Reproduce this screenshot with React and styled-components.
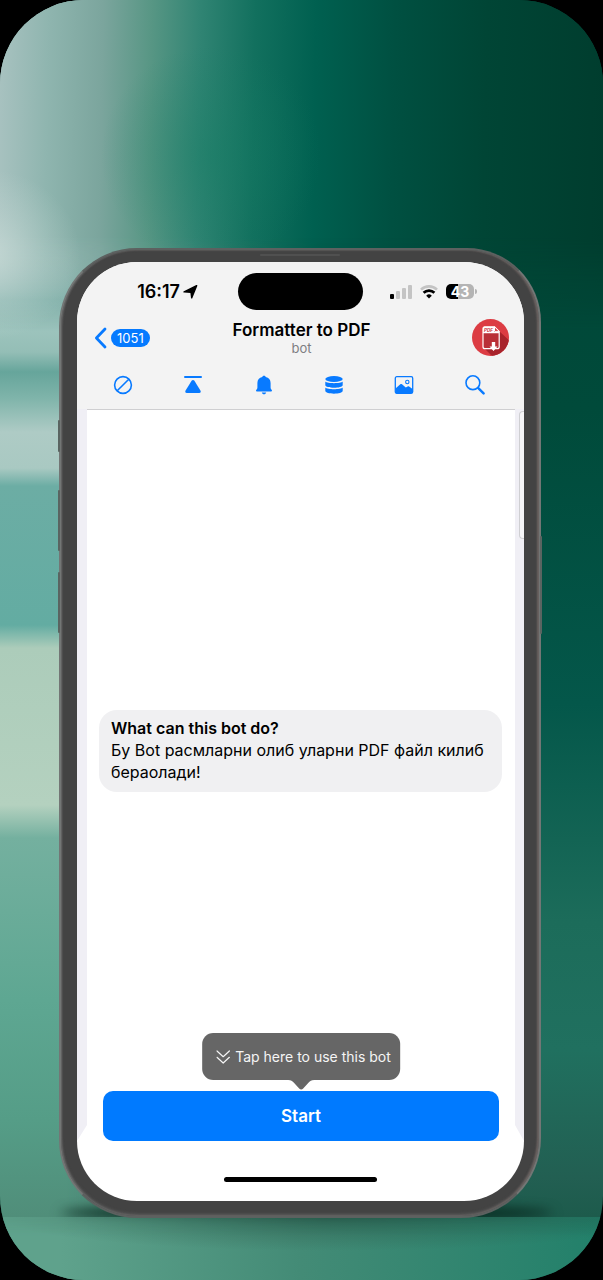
import React from "react";
import styled, { createGlobalStyle } from "styled-components";

const GlobalStyle = createGlobalStyle`
  * { box-sizing: border-box; }
  body {
    margin: 0;
    background: #000;
    font-family: Inter, "Liberation Sans", sans-serif;
    color: #000;
  }
  button { font: inherit; border: 0; padding: 0; margin: 0; background: none; cursor: pointer; }
  svg { display: block; }
`;

const Scene = styled.main`
  position: relative;
  isolation: isolate;
  display: flex;
  flex-direction: column;
  min-height: 100vh;
  padding: 248px 62px 62px 59px;
  border-radius: 84px;
  overflow: hidden;
  background: linear-gradient(#004435 0, #004a3a 32%, #04574a 55%, #1c6c5a 72%, #20705f 82%, #225f52 92%, #1d5b4c 95%);
`;

const Light = styled.div`
  position: absolute;
  z-index: -3;
`;

const LeftLight = styled(Light)`
  inset: 0;
  background: linear-gradient(
    #a6bcba 0, #9fbebb 200px, #b8cecc 222px, #b0cac7 245px, #84b4ad 300px,
    #9cc3bc 332px, #94beb6 352px, #66a59b 372px, #7fb4aa 398px, #aecbc5 432px,
    #a9c9c2 468px, #6cada4 486px, #63aca2 625px, #acccba 648px, #b4d1bf 805px,
    #74b09f 838px, #5ea792 1000px, #559d87 1120px, #4d8471 100%
  );
  mask-image: linear-gradient(90deg, #000 11%, transparent 54%);
`;

const TopLight = styled(Light)`
  inset: 0 0 auto;
  height: 330px;
  background:
    radial-gradient(ellipse 110px 110px at 35% 155px, rgba(20, 126, 100, 0.4), transparent),
    linear-gradient(
      91deg, #a8c2c0 0, #8fb5af 8%, #7ba59d 17%, #579684 25%, #308473 33%,
      #12705e 42%, #006050 52%, #005041 65%, #004535 80%, #003d2e 100%
    );
  mask-image: linear-gradient(#000 72%, transparent);
`;

const Glow = styled(Light)`
  top: 170px;
  left: -100px;
  width: 180px;
  height: 170px;
  background: radial-gradient(closest-side, rgba(208, 224, 220, 0.65), rgba(208, 224, 220, 0.3) 50%, transparent);
`;

const Floor = styled.div`
  position: absolute;
  inset: auto 0 0;
  z-index: -1;
  height: 63px;
  background:
    radial-gradient(ellipse 55% 34px at 55% 0, rgba(40, 78, 64, 0.5), transparent),
    linear-gradient(90deg, #5fa28c 10%, #438b76 50%, #22806a);
  mask-image: linear-gradient(rgba(0, 0, 0, 0.7), #000 30%);
`;

const Shadow = styled.div`
  position: absolute;
  inset: auto 50px 60px 60px;
  z-index: -2;
  height: 14px;
  border-radius: 50%;
  background: #06231a;
  filter: blur(6px);
`;

const Phone = styled.div`
  position: relative;
  flex: 1;
  display: flex;
  flex-direction: column;
  padding: 12px 15px 15px 16px;
  border: 2px solid #737675;
  border-top-color: #5d6160;
  border-bottom-color: #5d6160;
  border-radius: 78px 74px 80px 78px;
  background: #434343;
  box-shadow: inset 1px 0 2px #6b6b6b, inset -2px 0 2px #6b6260, inset 0 -2px 3px #5c5c5c;
`;

const SideKey = styled.span`
  position: absolute;
  ${(p) => p.$side}: -3px;
  top: ${(p) => p.$top}px;
  width: 2px;
  height: ${(p) => p.$size}px;
  border-radius: 1px;
  background: #5a6461;
`;

const Speaker = styled.span`
  position: absolute;
  top: 4px;
  left: 50%;
  width: 80px;
  height: 2px;
  margin-left: -40px;
  border-radius: 1px;
  background: #505050;
`;

const Screen = styled.div`
  flex: 1;
  display: flex;
  flex-direction: column;
  overflow: hidden;
  border-radius: 60px;
  background: #fff;
`;

const Header = styled.header`
  display: flex;
  flex-direction: column;
  background: #f3f3f3;
`;

const StatusBar = styled.div`
  display: grid;
  grid-template-columns: 1fr 125px 1fr;
  align-items: center;
  padding-top: 11px;
`;

const Clock = styled.div`
  display: flex;
  justify-content: flex-end;
  align-items: center;
  gap: 3px;
  padding-right: 40px;
  font-size: 18px;
  line-height: 22px;
  font-weight: 600;
`;

const Island = styled.div`
  height: 37px;
  border-radius: 19px;
  background: #000;
`;

const Indicators = styled.div`
  display: flex;
  align-items: center;
  gap: 8px;
  padding-left: 27px;
`;

const Battery = styled.div`
  display: flex;
  align-items: center;
  gap: 1px;
`;

const BatteryLevel = styled.span`
  width: 28px;
  height: 15px;
  border-radius: 5px;
  background: linear-gradient(90deg, #000 43%, #b4b4b4 43%);
  color: #fff;
  font-size: 14px;
  line-height: 15px;
  font-weight: 700;
  text-align: center;
`;

const BatteryTip = styled.span`
  width: 2px;
  height: 5px;
  border-radius: 0 2px 2px 0;
  background: #b4b4b4;
`;

const NavBar = styled.nav`
  display: grid;
  grid-template-columns: 1fr auto 1fr;
  align-items: center;
  height: 51px;
  padding: 4px 15px 0 17px;
`;

const BackButton = styled.button`
  display: flex;
  align-items: center;
  gap: 4px;
  justify-self: start;
`;

const Unread = styled.span`
  padding: 0 6px;
  border-radius: 9px;
  background: #057aff;
  color: #fff;
  font-size: 13px;
  line-height: 18px;
`;

const Titles = styled.div`
  display: flex;
  flex-direction: column;
  text-align: center;
`;

const Title = styled.h1`
  margin: 0;
  font-size: 17px;
  line-height: 20px;
  font-weight: 600;
`;

const Subtitle = styled.span`
  color: #7e7e82;
  font-size: 13px;
  line-height: 16px;
`;

const AvatarButton = styled.button`
  justify-self: end;
`;

const Toolbar = styled.div`
  display: flex;
  height: 48px;
  padding: 0 14px 0 11px;
`;

const ToolButton = styled.button`
  flex: 1;
  display: flex;
  align-items: center;
  justify-content: center;
  color: #087aff;
`;

const Body = styled.div`
  flex: 1;
  display: grid;
  grid-template-columns: 10px 1fr 9px;
`;

const Edge = styled.div`
  display: flex;
  justify-content: flex-end;
  background: #f0eff5;
  clip-path: ${(p) =>
    p.$right
      ? "polygon(0 0, 100% 0, 100% 100%, 0 calc(100% - 16px))"
      : "polygon(0 0, 100% 0, 100% calc(100% - 16px), 0 100%)"};
`;

const ScrollThumb = styled.span`
  width: 5px;
  height: 128px;
  margin-top: 2px;
  border: 1px solid #cfcfd2;
  border-right: 0;
  border-radius: 4px 0 0 4px;
  background: #f5f5f7;
`;

const Chat = styled.div`
  display: flex;
  flex-direction: column;
  border-top: 1px solid #cfcfd1;
`;

const Conversation = styled.section`
  flex: 1;
  display: flex;
  flex-direction: column;
  justify-content: center;
  padding: 0 13px 0 12px;
`;

const Bubble = styled.article`
  padding: 7px 8px 9px 12px;
  border-radius: 18px;
  background: #f0f0f2;
  font-size: 16px;
  line-height: 22px;
`;

const Question = styled.h2`
  margin: 0;
  font-size: inherit;
  font-weight: 600;
`;

const Answer = styled.p`
  margin: 0;
`;

const StartArea = styled.div`
  position: relative;
  display: flex;
  padding: 0 16px;
`;

const Hint = styled.div`
  position: absolute;
  bottom: calc(100% + 11px);
  left: 50%;
  transform: translateX(-50%);
  display: flex;
  align-items: center;
  gap: 5px;
  height: 47px;
  padding: 0 9px 0 14px;
  border-radius: 11px;
  background: #666;
  color: #f5f5f5;
  font-size: 14px;
  white-space: nowrap;
`;

const HintArrow = styled.svg`
  position: absolute;
  top: 100%;
  left: 50%;
  margin-left: -13px;
`;

const StartButton = styled.button`
  flex: 1;
  height: 50px;
  border-radius: 10px;
  background: #007aff;
  color: #fff;
  font-size: 17px;
  font-weight: 600;
`;

const HomeArea = styled.footer`
  display: flex;
  justify-content: center;
  height: 60px;
  padding-top: 36px;
`;

const HomeBar = styled.span`
  width: 153px;
  height: 5px;
  border-radius: 3px;
  background: #000;
`;

const LocationIcon = () => (
  <svg width="15" height="14" viewBox="0 0 15 14" aria-hidden="true">
    <path d="M14.300 .9 9.300 13.200c-.3.6-1.200.5-1.300-.2L7.400 8 1 7.600c-.8-.1-.9-1-.2-1.300L13.300.1c.8-.3 1.300.1 1 .8Z" fill="#000" />
  </svg>
);

const SignalIcon = () => (
  <svg width="22" height="14" viewBox="0 0 22 14" aria-hidden="true">
    <rect x="0" y="9" width="4" height="5" rx="1" fill="#000" />
    <rect x="6" y="6" width="4" height="8" rx="1" fill="#c4c4c4" />
    <rect x="12" y="3" width="4" height="11" rx="1" fill="#c4c4c4" />
    <rect x="18" y="0" width="4" height="14" rx="1" fill="#c4c4c4" />
  </svg>
);

const WifiIcon = () => (
  <svg width="18" height="14" viewBox="0 0 18 14" fill="none" aria-hidden="true">
    <path d="M1 4.600A11.500 11.500 0 0 1 17 4.600" stroke="#c4c4c4" strokeWidth="2.600" />
    <path d="M3.600 7.800A7.700 7.700 0 0 1 14.400 7.800" stroke="#000" strokeWidth="2.700" />
    <path d="M9 13.600 6.200 10.700a4 4 0 0 1 5.600 0Z" fill="#000" />
  </svg>
);

const ChevronIcon = () => (
  <svg width="13" height="22" viewBox="0 0 13 22" fill="none" aria-hidden="true">
    <path d="M11 2 2.400 11 11 20" stroke="#087aff" strokeWidth="2.800" strokeLinecap="round" strokeLinejoin="round" />
  </svg>
);

const AvatarIcon = () => (
  <svg width="37" height="37" viewBox="0 0 37 37" aria-hidden="true">
    <defs>
      <clipPath id="avatar-disc"><circle cx="18.500" cy="18.500" r="18.500" /></clipPath>
    </defs>
    <g clipPath="url(#avatar-disc)">
      <rect width="37" height="37" fill="#dc3c43" />
      <path d="m27 12 14 13v16H24l-12-12 15-1Z" fill="#a8232b" />
      <path d="M12.500 7.800H22.500l4.700 4.600v15.300a2 2 0 0 1-2 2H13a2 2 0 0 1-2-2V9.500a1.700 1.700 0 0 1 1.500-1.700Z" fill="#b92f37" stroke="#fff" strokeWidth="1.200" />
      <path d="M11 14.300V9.500a1.700 1.700 0 0 1 1.500-1.700H22V13h5v1.300Z" fill="#fff" />
      <path d="M22.500 7.800v4.600h4.700Z" fill="#dc3c43" stroke="#fff" />
      <text x="12" y="12.800" fontSize="4.500" fontWeight="700" fontStyle="italic" fill="#c9303a">PDF</text>
      <path d="M19.800 23h3.400v4.500h2.300L21.500 32l-4-4.500h2.300Z" fill="#fff" />
    </g>
  </svg>
);

const BlockIcon = () => (
  <svg width="20" height="20" viewBox="0 0 20 20" fill="none" stroke="currentColor" strokeWidth="1.600" aria-hidden="true">
    <circle cx="10" cy="10" r="8.400" />
    <path d="M4.200 15.800 15.800 4.200" />
  </svg>
);

const TopIcon = () => (
  <svg width="20" height="20" viewBox="0 0 20 20" fill="currentColor" aria-hidden="true">
    <rect x="1" y="1" width="18" height="2" rx="1" />
    <path d="M8.600 5.700c.8-1 2-1 2.800 0l6 9.700c.8 1.300.2 2.500-1.200 2.500H3.800c-1.400 0-2-1.200-1.200-2.500Z" />
  </svg>
);

const BellIcon = () => (
  <svg width="20" height="20" viewBox="0 0 20 20" fill="currentColor" aria-hidden="true">
    <path d="M10 .8c.9 0 1.500.5 1.700 1.300 3.100.7 4.900 2.900 4.900 6v4.500c0 1 .4 1.500 1.100 2.300.6.7.3 1.500-.6 1.500H2.900c-.9 0-1.200-.8-.6-1.500.7-.8 1.100-1.300 1.100-2.300V8.100c0-3.100 1.800-5.300 4.900-6C8.500 1.300 9.100.8 10 .8Z" />
    <path d="M7.800 17.400h4.400c-.3 1.100-1.100 1.800-2.200 1.800s-1.900-.7-2.200-1.800Z" />
  </svg>
);

const StackIcon = () => (
  <svg width="20" height="20" viewBox="0 0 20 20" fill="currentColor" aria-hidden="true">
    <ellipse cx="10" cy="4" rx="8.700" ry="3" />
    <path d="M1.300 6.500c1.800 2.200 15.600 2.200 17.400 0v3.400c0 3.700-17.400 3.700-17.400 0Z" />
    <path d="M1.300 12.400c1.800 2.300 15.600 2.300 17.400 0v3.400c0 3.800-17.400 3.800-17.400 0Z" />
  </svg>
);

const PictureIcon = () => (
  <svg width="20" height="20" viewBox="0 0 20 20" aria-hidden="true">
    <rect x="1.300" y="1.700" width="17.400" height="16.600" rx="1.500" fill="none" stroke="currentColor" strokeWidth="1.300" />
    <path d="M1.500 13.500 6.300 9.300c.6-.5 1.100-.5 1.700 0l3.800 3.300 1.800-1.100c.5-.3 1-.3 1.500 0l3.500 2.400v4.300H1.500Z" fill="currentColor" />
    <circle cx="13.300" cy="7" r="1.700" fill="none" stroke="currentColor" strokeWidth="1.100" />
  </svg>
);

const SearchIcon = () => (
  <svg width="20" height="20" viewBox="0 0 20 20" fill="none" stroke="currentColor" strokeLinecap="round" aria-hidden="true">
    <circle cx="7.900" cy="7.700" r="6.900" strokeWidth="1.600" />
    <path d="m13.300 13.100 5.300 5.300" strokeWidth="2.400" />
  </svg>
);

const DoubleDownIcon = () => (
  <svg width="14" height="14" viewBox="0 0 14 14" fill="none" stroke="#f5f5f5" strokeWidth="1.200" strokeLinecap="round" strokeLinejoin="round" aria-hidden="true">
    <path d="m.8 1 6.200 5.700L13.200 1M.8 7.300 7 13l6.200-5.700" />
  </svg>
);

const tools = [
  { label: "Block", Icon: BlockIcon },
  { label: "Scroll to top", Icon: TopIcon },
  { label: "Notifications", Icon: BellIcon },
  { label: "Storage", Icon: StackIcon },
  { label: "Media", Icon: PictureIcon },
  { label: "Search", Icon: SearchIcon },
];

export default function App() {
  return (
    <>
      <GlobalStyle />
      <Scene>
        <LeftLight />
        <TopLight />
        <Glow />
        <Shadow />
        <Floor />
        <Phone>
          <SideKey $side="left" $top={170} $size={32} />
          <SideKey $side="left" $top={240} $size={61} />
          <SideKey $side="left" $top={322} $size={61} />
          <SideKey $side="right" $top={286} $size={98} />
          <Speaker />
          <Screen>
            <Header>
              <StatusBar>
                <Clock>16:17<LocationIcon /></Clock>
                <Island />
                <Indicators>
                  <SignalIcon />
                  <WifiIcon />
                  <Battery>
                    <BatteryLevel>43</BatteryLevel>
                    <BatteryTip />
                  </Battery>
                </Indicators>
              </StatusBar>
              <NavBar>
                <BackButton aria-label="Back, 1051 unread">
                  <ChevronIcon />
                  <Unread>1051</Unread>
                </BackButton>
                <Titles>
                  <Title>Formatter to PDF</Title>
                  <Subtitle>bot</Subtitle>
                </Titles>
                <AvatarButton aria-label="Bot profile"><AvatarIcon /></AvatarButton>
              </NavBar>
              <Toolbar>
                {tools.map(({ label, Icon }) => (
                  <ToolButton key={label} aria-label={label}><Icon /></ToolButton>
                ))}
              </Toolbar>
            </Header>
            <Body>
              <Edge />
              <Chat>
                <Conversation>
                  <Bubble>
                    <Question>What can this bot do?</Question>
                    <Answer>Бу Bot расмларни олиб уларни PDF файл килиб бераолади!</Answer>
                  </Bubble>
                </Conversation>
                <StartArea>
                  <Hint>
                    <DoubleDownIcon />
                    Tap here to use this bot
                    <HintArrow width="26" height="10" viewBox="0 0 26 10" aria-hidden="true">
                      <path d="M0 0h26c-3 0-4 1-5.500 2.500l-5.500 6c-1.200 1.300-2.800 1.300-4 0l-5.500-6C4 1 3 0 0 0Z" fill="#666" />
                    </HintArrow>
                  </Hint>
                  <StartButton>Start</StartButton>
                </StartArea>
              </Chat>
              <Edge $right><ScrollThumb /></Edge>
            </Body>
            <HomeArea><HomeBar /></HomeArea>
          </Screen>
        </Phone>
      </Scene>
    </>
  );
}
